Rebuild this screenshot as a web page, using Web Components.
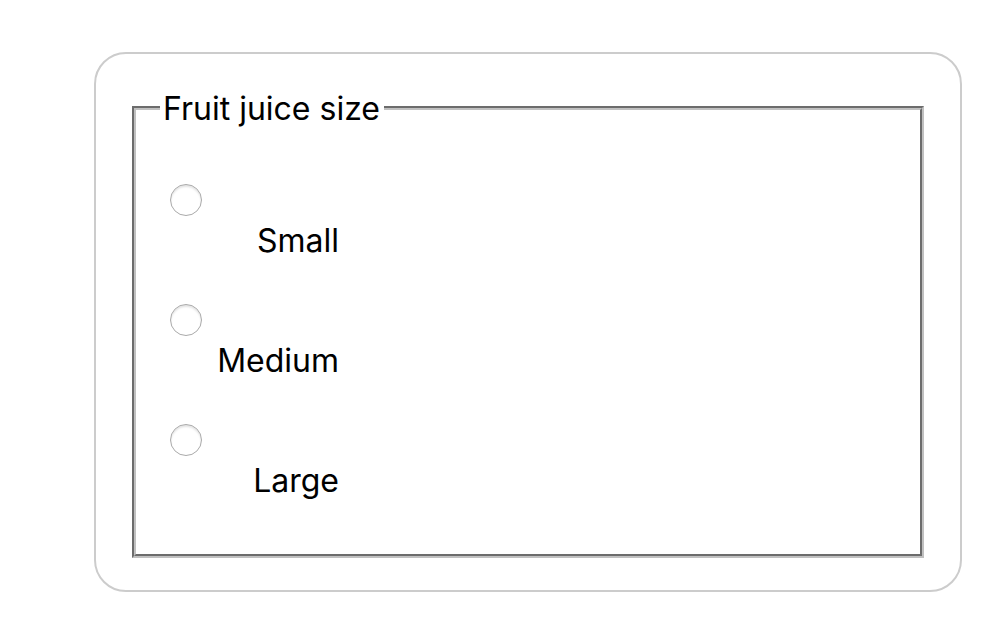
<!DOCTYPE html>
<html lang="en">
<head>
<meta charset="utf-8">
<title>Fruit juice size</title>
<style>
body { margin: 0; padding: 52px 36px 32px 94px; background: #fff; color: #000; font: 32px/40px Inter, "Noto Sans", sans-serif; }
</style>
</head>
<body>
<form-card>
  <radio-group legend="Fruit juice size">
    <radio-option value="small">Small</radio-option>
    <radio-option value="medium">Medium</radio-option>
    <radio-option value="large">Large</radio-option>
  </radio-group>
</form-card>
<script>
class FormCard extends HTMLElement {
  constructor() {
    super();
    this.attachShadow({ mode: "open" }).innerHTML = `
      <style>
        :host { display: block; box-sizing: border-box; padding: 33px 36px 32px; border: 2px solid #ccc; border-radius: 32px; }
      </style>
      <slot></slot>`;
  }
}
class RadioGroup extends HTMLElement {
  constructor() {
    super();
    this.attachShadow({ mode: "open" }).innerHTML = `
      <style>
        :host { display: block; }
        fieldset { margin: 0; min-width: 0; padding: 55px 34px 53px; border: 4px groove #c0c0c0; }
        legend { margin-left: -10px; padding: 2px 4px 0 3px; }
        .options { display: grid; gap: 43px; }
      </style>
      <fieldset><legend></legend><div class="options"><slot></slot></div></fieldset>`;
    this.shadowRoot.querySelector("legend").textContent = this.getAttribute("legend");
    this.addEventListener("option-chosen", (e) => {
      for (const option of this.children) if (option !== e.target) option.clear();
    });
  }
}
class RadioOption extends HTMLElement {
  constructor() {
    super();
    this.attachShadow({ mode: "open" }).innerHTML = `
      <style>
        :host { display: grid; gap: 5px; }
        input { appearance: none; display: block; box-sizing: border-box; width: 32px; height: 32px; margin: 0; border: 1px solid #aaa; border-radius: 50%; background: #fff; box-shadow: inset 0 2px 2px #e4e4e4; }
        input:checked { background: radial-gradient(#333 0 6px, #fff 7px); }
        label { display: block; width: 169px; text-align: right; }
      </style>
      <input type="radio" id="choice"><label for="choice"><slot></slot></label>`;
    this.input = this.shadowRoot.querySelector("input");
    this.input.value = this.getAttribute("value");
    this.input.addEventListener("change", () => this.dispatchEvent(new CustomEvent("option-chosen", { bubbles: true })));
  }
  clear() { this.input.checked = false; }
}
customElements.define("form-card", FormCard);
customElements.define("radio-group", RadioGroup);
customElements.define("radio-option", RadioOption);
</script>
</body>
</html>
